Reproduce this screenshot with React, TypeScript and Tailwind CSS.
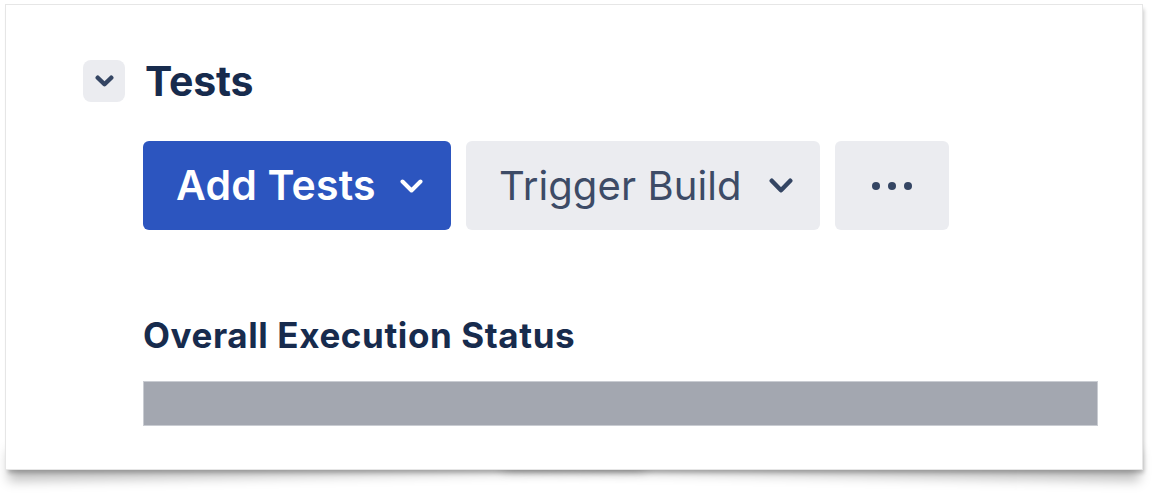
import React from "react";

function Chevron({ className, w, h, sw }: { className: string; w: number; h: number; sw: number }) {
  return (
    <svg width={w} height={h} viewBox={`0 0 ${w} ${h}`} className={className} fill="none">
      <path
        d={`M ${sw / 2 + 0.5} ${sw / 2 + 0.5} L ${w / 2} ${h - sw / 2 - 0.5} L ${w - sw / 2 - 0.5} ${sw / 2 + 0.5}`}
        stroke="currentColor"
        strokeWidth={sw}
        strokeLinecap="round"
        strokeLinejoin="round"
      />
    </svg>
  );
}

export default function App() {
  return (
    <div className="w-[1156px] h-[499px] bg-white relative overflow-hidden" style={{ fontFamily: "Inter, 'Noto Sans', sans-serif" }}>
      <div className="relative ml-[6px] mt-[5px] w-[1136px] h-[464px]">
        {/* lifted-corner shadows */}
        <div className="absolute left-[2px] bottom-[12px] w-[56%] h-[30px] bg-[#bbb] shadow-[0_24px_12px_rgba(0,0,0,0.25)] origin-left -rotate-[1deg]" />
        <div className="absolute right-[2px] bottom-[12px] w-[56%] h-[30px] bg-[#bbb] shadow-[0_24px_12px_rgba(0,0,0,0.25)] origin-right rotate-[1deg]" />
        <div className="relative w-full h-full bg-white shadow-[0_0_0_1px_#e6e6e6,2px_4px_4px_rgba(0,0,0,0.22)] pl-[77px] pt-[55px]">
          <div className="flex items-center gap-[20px] h-[42px]">
            <div className="w-[42px] h-[42px] rounded-[8px] bg-[#ebecf0] flex items-center justify-center text-[#344563]">
              <Chevron className="" w={19} h={12} sw={4.5} />
            </div>
            <div className="text-[41px] leading-none font-bold text-[#172b4d] tracking-[-0.2px]">Tests</div>
          </div>
          <div className="flex gap-[15px] mt-[39px] ml-[60px]">
            <div className="w-[308px] h-[89px] rounded-[6px] bg-[#2c55bf] text-white flex items-center pl-[33px]">
              <span className="text-[41px] font-semibold leading-none tracking-[0.2px]">Add Tests</span>
              <Chevron className="ml-auto mr-[28px]" w={23} h={14} sw={4} />
            </div>
            <div className="w-[354px] h-[89px] rounded-[6px] bg-[#ebecf0] flex items-center pl-[33px]">
              <span className="text-[40px] font-normal leading-none text-[#3d4b66] tracking-[0.1px]">Trigger Build</span>
              <Chevron className="ml-auto mr-[27px] text-[#344563]" w={24} h={15} sw={4.5} />
            </div>
            <div className="w-[114px] h-[89px] rounded-[6px] bg-[#ebecf0] flex items-center justify-center gap-[8px]">
              <span className="w-[8px] h-[8px] rounded-full bg-[#344563]" />
              <span className="w-[8px] h-[8px] rounded-full bg-[#344563]" />
              <span className="w-[8px] h-[8px] rounded-full bg-[#344563]" />
            </div>
          </div>
          <div className="ml-[60px] mt-[88px] text-[35px] font-bold leading-none text-[#172b4d] tracking-[0.6px]">Overall Execution Status</div>
          <div className="ml-[60px] mt-[28px] w-[955px] h-[45px] bg-[#a3a7b0] border border-[#c9ccd2]" />
        </div>
      </div>
    </div>
  );
}
